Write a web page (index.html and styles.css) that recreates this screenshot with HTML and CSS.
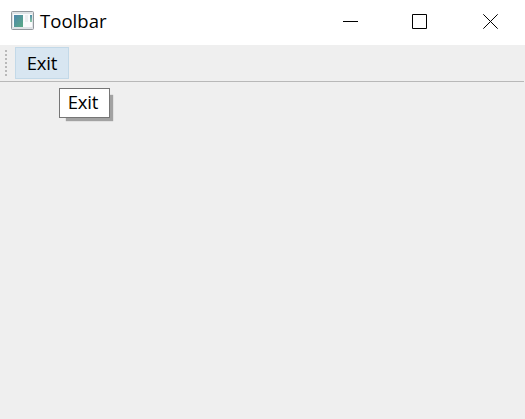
FILE: index.html
```html
<!DOCTYPE html>
<html lang="en">
<head>
<meta charset="utf-8">
<title>Toolbar</title>
<link rel="stylesheet" href="styles.css">
</head>
<body>
<div class="window">
  <header class="titlebar">
    <svg class="app-icon" width="23" height="19" viewBox="0 0 23 19">
      <defs>
        <linearGradient id="pane" x1="0" y1="0" x2="1" y2="1"><stop offset="0" stop-color="#4f86ad"/><stop offset="1" stop-color="#5aaa84"/></linearGradient>
        <linearGradient id="strip" x1="0" y1="0" x2="0" y2="1"><stop offset="0" stop-color="#4d8ca5"/><stop offset="1" stop-color="#8cc6a4"/></linearGradient>
      </defs>
      <rect x=".5" y=".5" width="22" height="18" rx="1" fill="#dfe3e6" stroke="#92979c"/>
      <rect x="2" y="3" width="19" height="13" fill="#fafbfc"/>
      <rect x="3" y="4" width="9" height="12" fill="url(#pane)"/>
      <rect x="14" y="4" width="3" height="7" fill="#eceef0"/>
      <rect x="19" y="4" width="2" height="7" fill="url(#strip)"/>
    </svg>
    <span class="title">Toolbar</span>
    <div class="controls">
      <svg width="15" height="15" viewBox="0 0 15 15"><path d="M0 7.5H15"/></svg>
      <svg width="15" height="15" viewBox="0 0 15 15"><path d="M.5.5h14v14H.5z"/></svg>
      <svg width="15" height="15" viewBox="0 0 15 15"><path d="M.3.3l14.4 14.4M14.7.3L.3 14.7"/></svg>
    </div>
  </header>
  <div class="toolbar">
    <div class="grip"></div>
    <button class="tool">Exit<span class="tooltip">Exit</span></button>
  </div>
  <main class="content"></main>
</div>
</body>
</html>
```
FILE: styles.css
```css
* { box-sizing: border-box; }
body {
  margin: 0;
  font: 18.5px/24px "Open Sans", "Noto Sans", sans-serif;
  color: #000;
}
.window {
  height: 419px;
  display: flex;
  flex-direction: column;
  background: #efefef;
  overflow: hidden;
}
.titlebar {
  height: 45px;
  flex: none;
  display: flex;
  align-items: flex-start;
  padding: 11px 27px 0 11px;
  background: #fff;
}
.app-icon { flex: none; }
.title {
  margin: -2px 0 0 6px;
  font-family: "Open Sans", sans-serif;
  font-size: 18.5px;
  letter-spacing: .05px;
}
.controls {
  display: flex;
  margin: 3px 0 0 auto;
}
.controls svg {
  fill: none;
  stroke: #000;
  stroke-width: 1;
}
.controls svg + svg { margin-left: 54px; }
.controls svg:last-child { margin-left: 56px; }
.toolbar {
  height: 37px;
  flex: none;
  display: flex;
  padding: 2px 0 2px 5px;
  border-bottom: 1px solid #b8b8b8;
  margin-right: 1px;
}
.grip {
  width: 2px;
  height: 26px;
  margin: 3px 8px 0 0;
  background: repeating-linear-gradient(#b9b9b9 0 2px, transparent 2px 4px);
}
.tool {
  position: relative;
  width: 54px;
  height: 32px;
  padding: 0;
  border: 1px solid #c3d9e8;
  background: #d8e6f1;
  color: #000;
  font: inherit;
  letter-spacing: -.15px;
  line-height: 30px;
}
.tooltip {
  position: absolute;
  left: 43px;
  top: 40px;
  width: 51px;
  height: 30px;
  padding-right: 3px;
  border: 1px solid #767676;
  background: #fff;
  box-shadow: 5px 5px 1px -2px #a2a2a2;
  line-height: 26px;
}
.content { flex: 1; }
```
